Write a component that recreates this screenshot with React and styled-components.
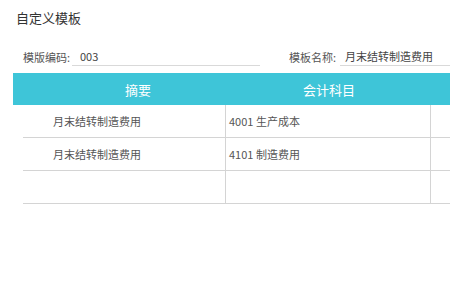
import React from "react";
import styled, { createGlobalStyle } from "styled-components";

const GlobalStyle = createGlobalStyle`
  html, body {
    margin: 0;
    padding: 0;
    background: #fff;
    font-family: "Noto Sans CJK SC", "Noto Sans", sans-serif;
  }
`;

const Page = styled.div`
  width: 450px;
  height: 300px;
  overflow: hidden;
  position: relative;
`;

const Title = styled.div`
  margin: 9px 0 0 16px;
  height: 18px;
  line-height: 18px;
  font-size: 13px;
  color: #333;
`;

const FormRow = styled.div`
  display: flex;
  align-items: flex-end;
  margin-top: 21px;
  height: 18px;
`;

const Field = styled.div`
  display: flex;
  align-items: flex-end;
  margin-left: ${(props) => props.offset}px;
`;

const Label = styled.span`
  font-size: 11px;
  color: #555;
  line-height: 18px;
  width: ${(props) => props.w}px;
  white-space: nowrap;
`;

const Input = styled.div`
  width: ${(props) => props.w}px;
  padding-left: ${(props) => props.pad}px;
  box-sizing: border-box;
  border-bottom: 1px solid #d9d9d9;
  font-size: 11px;
  color: #444;
  line-height: 18px;
  white-space: nowrap;
`;

const Table = styled.div`
  margin-top: 7px;
`;

const Head = styled.div`
  display: grid;
  grid-template-columns: 250px 132px 1fr;
  margin-left: 13px;
  height: 32px;
  background: #3ec5d8;
  color: #fff;
  font-size: 13px;
`;

const HeadCell = styled.div`
  display: flex;
  align-items: center;
  justify-content: center;
`;

const Row = styled.div`
  display: grid;
  grid-template-columns: 203px 205px 1fr;
  margin-left: 23px;
  height: 33px;
  box-sizing: border-box;
  border-bottom: 1px solid #d4d4d4;
`;

const Cell = styled.div`
  display: flex;
  align-items: center;
  padding-left: ${(props) => props.pad}px;
  border-right: ${(props) => (props.last ? "none" : "1px solid #d4d4d4")};
  font-size: 11px;
  color: #555;
  white-space: nowrap;
`;

const rows = [
  { summary: "月末结转制造费用", account: "4001 生产成本" },
  { summary: "月末结转制造费用", account: "4101 制造费用" },
  { summary: "", account: "" },
];

export default function App() {
  return (
    <Page>
      <GlobalStyle />
      <Title>自定义模板</Title>
      <FormRow>
        <Field offset={23}>
          <Label w={49}>模版编码:</Label>
          <Input w={188} pad={8}>003</Input>
        </Field>
        <Field offset={29}>
          <Label w={51}>模板名称:</Label>
          <Input w={110} pad={5}>月末结转制造费用</Input>
        </Field>
      </FormRow>
      <Table>
        <Head>
          <HeadCell>摘要</HeadCell>
          <HeadCell>会计科目</HeadCell>
          <HeadCell />
        </Head>
        {rows.map((r, i) => (
          <Row key={i}>
            <Cell pad={30}>{r.summary}</Cell>
            <Cell pad={3}>{r.account}</Cell>
            <Cell last />
          </Row>
        ))}
      </Table>
    </Page>
  );
}
